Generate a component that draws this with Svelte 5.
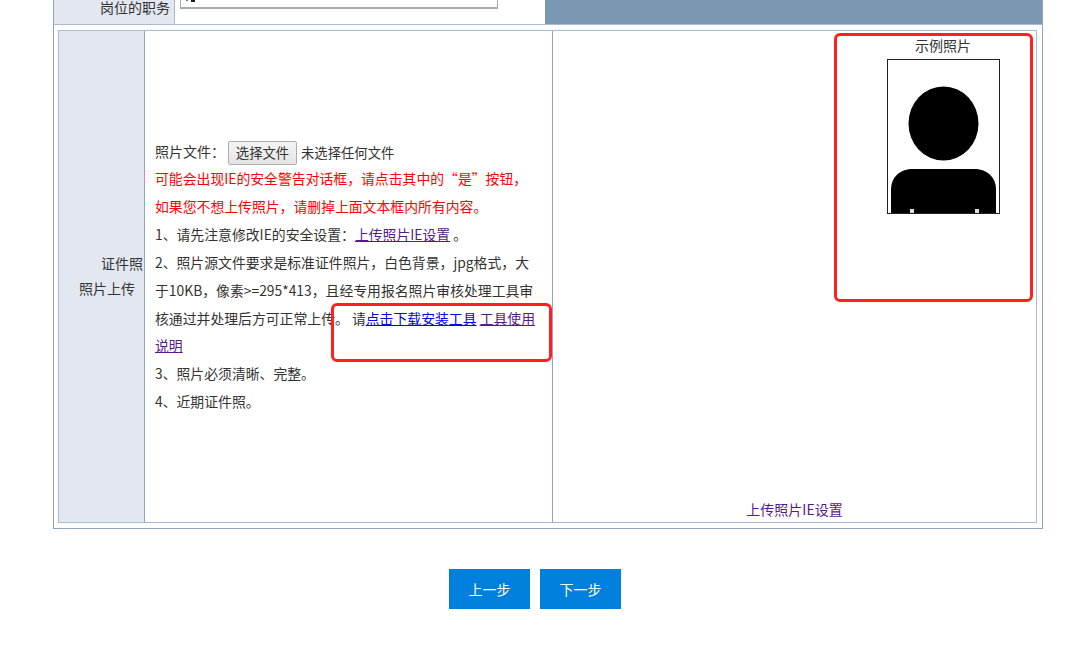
<script>
  const topLabel = '岗位的职务';
</script>

<div class="page">
  <div class="outer">
    <div class="top-row">
      <div class="top-label">{topLabel}</div>
      <div class="top-field"><div class="input"><i class="tick"></i><i class="tick dark"></i></div></div>
      <div class="top-fill"></div>
    </div>
    <div class="inner-wrap">
      <div class="inner">
        <div class="label-cell"><div>证件照<br /><span class="label-second">照片上传</span></div></div>
        <div class="info-cell">
          <div class="file-line">
            <span class="file-label">照片文件：</span>
            <button class="file-btn">选择文件</button>
            <span class="file-none">未选择任何文件</span>
          </div>
          <p class="red">可能会出现IE的安全警告对话框，请点击其中的“是”按钮，</p>
          <p class="red">如果您不想上传照片，请删掉上面文本框内所有内容。</p>
          <p>1、请先注意修改IE的安全设置：<a class="visited" href="#a">上传照片IE设置</a> 。</p>
          <p>2、照片源文件要求是标准证件照片，白色背景，jpg格式，大于10KB，像素&gt;=295*413，且经专用报名照片审核处理工具审核通过并处理后方可正常上传。 请<a class="link" href="#b">点击下载安装工具</a> <a class="visited" href="#c">工具使用说明</a></p>
          <p>3、照片必须清晰、完整。</p>
          <p>4、近期证件照。</p>
        </div>
        <div class="photo-cell">
          <div class="sample">
            <div class="sample-title">示例照片</div>
            <svg class="portrait" width="113" height="155" viewBox="0 0 113 155">
              <rect width="113" height="155" fill="#fff" />
              <g class="soft">
                <ellipse cx="56.5" cy="64.5" rx="35" ry="37" fill="#000" />
                <path d="M4 155V131C4 117 14 110 26 110H87C99 110 109 117 109 131V155Z" fill="#000" />
              </g>
              <rect x="23" y="150" width="4" height="4" fill="#ddd" />
              <rect x="88" y="150" width="4" height="4" fill="#ddd" />
              <rect x="0.5" y="0.5" width="112" height="154" fill="none" stroke="#222" />
            </svg>
          </div>
          <a class="ie-link" href="#d">上传照片IE设置</a>
        </div>
      </div>
    </div>
  </div>

  <div class="actions">
    <button class="step">上一步</button>
    <button class="step">下一步</button>
  </div>

  <div class="mark mark-sample"></div>
  <div class="mark mark-tool"></div>
</div>

<style>
  :global(body) {
    margin: 0;
    background: #fff;
  }
  .page {
    position: relative;
    width: 1080px;
    height: 645px;
    overflow: hidden;
    padding-left: 53px;
    box-sizing: border-box;
    font-family: "Noto Sans CJK SC", "Liberation Sans", sans-serif;
    font-size: 14px;
    color: #333;
  }
  .outer {
    width: 990px;
    height: 529px;
    box-sizing: border-box;
    border: 1px solid #8fa6c2;
    border-top: 0;
    display: flex;
    flex-direction: column;
  }
  .top-row {
    display: flex;
    height: 24px;
    flex: none;
    border-bottom: 1px solid #a9bbd0;
  }
  .top-label {
    width: 121px;
    flex: none;
    background: #e3e7ef;
    border-right: 1px solid #a9bbd0;
    text-align: right;
    padding-right: 4px;
    box-sizing: border-box;
    line-height: 15px;
  }
  .top-field {
    width: 370px;
    flex: none;
    padding-left: 5px;
    box-sizing: border-box;
  }
  .input {
    width: 311px;
    height: 7px;
    border: 1px solid #aaa;
    border-top: 0;
    border-bottom-width: 2px;
    background: #fff;
    display: flex;
    align-items: flex-start;
    gap: 3px;
    padding-left: 5px;
    box-sizing: content-box;
  }
  .tick {
    display: block;
    width: 2px;
    height: 1px;
    background: #4a7fa8;
  }
  .tick.dark {
    width: 4px;
    height: 2px;
    background: #221a10;
  }
  .top-fill {
    flex: 1;
    background: #7b98b2;
  }
  .inner-wrap {
    padding: 5px 5px 5px 4px;
    flex: 1;
    display: flex;
    min-height: 0;
  }
  .inner {
    flex: 1;
    display: flex;
    border: 1px solid #a9bbd0;
    min-width: 0;
  }
  .label-cell {
    width: 86px;
    flex: none;
    background: #e3e7ef;
    border-right: 1px solid #8fa6c2;
    box-sizing: border-box;
    text-align: right;
    line-height: 25px;
    display: flex;
    align-items: center;
    justify-content: flex-end;
    padding: 0 1px 1px 0;
  }
  .label-second {
    padding-right: 8px;
  }
  .info-cell {
    width: 408px;
    flex: none;
    box-sizing: border-box;
    border-right: 1px solid #8fa6c2;
    padding: 109px 11px 0 10px;
    line-height: 27.9px;
    font-size: 13.85px;
  }
  .info-cell p {
    margin: 0;
  }
  .file-line {
    display: flex;
    align-items: center;
    height: 25px;
    line-height: 24px;
  }
  .file-label {
    margin-right: 3px;
    padding-bottom: 4px;
    font-size: 14px;
  }
  .file-btn {
    width: 69px;
    height: 24px;
    padding: 0;
    border: 1px solid #adadad;
    border-radius: 2px;
    background: linear-gradient(#f4f4f4, #e4e4e4);
    font: inherit;
    font-size: 13.33px;
    color: #333;
    margin: 1px 4px 0 0;
    line-height: 22px;
  }
  .file-none {
    font-size: 13.33px;
    padding-top: 1px;
  }
  .red {
    color: #f00;
  }
  .visited {
    color: #551a8b;
  }
  .link {
    color: #00e;
  }
  .photo-cell {
    flex: 1;
    min-width: 0;
    display: flex;
    flex-direction: column;
    align-items: flex-end;
  }
  .sample {
    width: 186px;
    display: flex;
    flex-direction: column;
    align-items: center;
    flex: none;
  }
  .sample-title {
    line-height: 28px;
    height: 28px;
  }
  .portrait {
    display: block;
  }
  .soft {
    filter: blur(0.6px);
  }
  .ie-link {
    margin-top: auto;
    align-self: center;
    margin-bottom: 3px;
    color: #551a8b;
    text-decoration: none;
    line-height: 20px;
  }
  .actions {
    display: flex;
    gap: 10px;
    padding: 40px 0 0 396px;
  }
  .step {
    width: 81px;
    height: 40px;
    border: 0;
    padding: 0;
    background: #0080dd;
    color: #fff;
    font: inherit;
    font-size: 14px;
  }
  .mark {
    position: absolute;
    border: 3px solid #ff2020;
    border-radius: 6px;
    box-sizing: border-box;
    pointer-events: none;
  }
  .mark-sample {
    left: 834px;
    top: 33px;
    width: 199px;
    height: 269px;
  }
  .mark-tool {
    left: 331px;
    top: 303px;
    width: 221px;
    height: 59px;
  }
</style>
